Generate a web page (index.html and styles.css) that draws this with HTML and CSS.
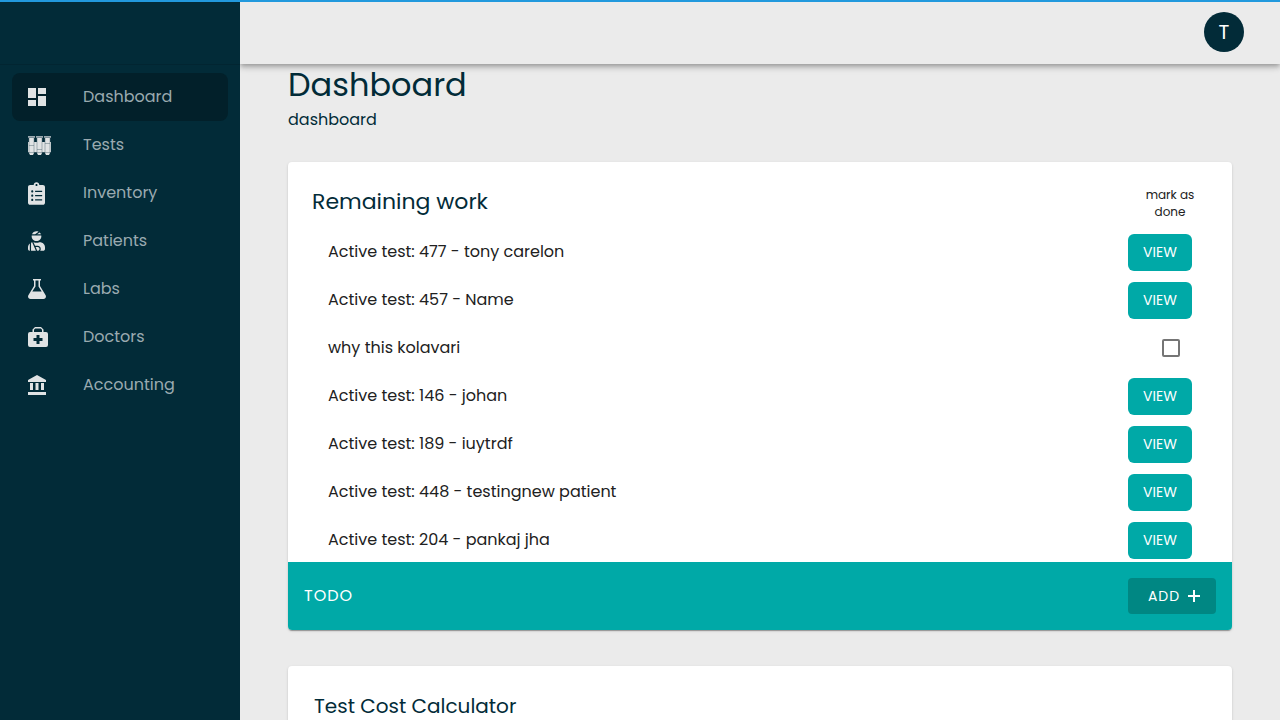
FILE: index.html
```html
<!DOCTYPE html>
<html lang="en">
<head>
<meta charset="utf-8">
<meta name="viewport" content="width=device-width, initial-scale=1">
<title>Dashboard</title>
<link rel="stylesheet" href="styles.css">
</head>
<body>
<div class="progress"></div>
<div class="app">
  <aside class="sidebar">
    <div class="sidebar-head"></div>
    <nav class="nav">
      <a class="nav-link active" href="#"><span class="nav-icon"><svg width="18" height="18" viewBox="0 0 18 18"><path d="M0 0h8v10H0zM10 0h8v6h-8zM0 12h8v6H0zM10 8h8v10h-8z"/></svg></span>Dashboard</a>
      <a class="nav-link" href="#"><span class="nav-icon"><svg width="23" height="19" viewBox="0 0 23 19"><path d="M0 6h23v10H0z"/><path class="tube" d="M0 0h7v2H0zM8 0h7v2H8zM16 0h7v2h-7z"/><path d="M1 2h5v15l-1 2H2l-1-2zM9 2h5v15l-1 2h-3l-1-2zM17 2h5v15l-1 2h-3l-1-2z"/><path class="tube-line" d="M1 2v15M6 2v15M9 2v15M14 2v15M17 2v15M22 2v15M1 9.500h5M9 13.500h5M17 7.500h5M0 16.500h23M0 1.500h7M8 1.500h7M16 1.500h7"/></svg></span>Tests</a>
      <a class="nav-link" href="#"><span class="nav-icon"><svg width="17" height="23" viewBox="0 0 384 512"><path d="M336 64h-80c0-35.300-28.700-64-64-64s-64 28.700-64 64H48C21.500 64 0 85.500 0 112v352c0 26.500 21.500 48 48 48h288c26.500 0 48-21.500 48-48V112c0-26.500-21.500-48-48-48zM96 424c-13.300 0-24-10.700-24-24s10.700-24 24-24 24 10.700 24 24-10.700 24-24 24zm0-96c-13.300 0-24-10.700-24-24s10.700-24 24-24 24 10.700 24 24-10.700 24-24 24zm0-96c-13.300 0-24-10.700-24-24s10.700-24 24-24 24 10.700 24 24-10.700 24-24 24zm96-192c13.300 0 24 10.700 24 24s-10.700 24-24 24-24-10.700-24-24 10.700-24 24-24zm128 368c0 4.400-3.600 8-8 8H168c-4.400 0-8-3.600-8-8v-16c0-4.400 3.600-8 8-8h144c4.400 0 8 3.600 8 8v16zm0-96c0 4.400-3.600 8-8 8H168c-4.400 0-8-3.600-8-8v-16c0-4.400 3.600-8 8-8h144c4.400 0 8 3.600 8 8v16zm0-96c0 4.400-3.600 8-8 8H168c-4.400 0-8-3.600-8-8v-16c0-4.400 3.600-8 8-8h144c4.400 0 8 3.600 8 8v16z"/></svg></span>Inventory</a>
      <a class="nav-link" href="#"><span class="nav-icon"><svg width="17" height="20" viewBox="0 0 448 512"><path d="M277.370 11.980C261.080 4.470 243.110 0 224 0c-53.690 0-99.500 33.130-118.510 80h81.190l90.690-68.020zM342.510 80c-7.900-19.470-20.670-36.200-36.490-49.520L239.990 80h102.520zM224 256c70.690 0 128-57.310 128-128 0-5.480-.950-10.700-1.610-16H97.610c-.670 5.300-1.610 10.520-1.610 16 0 70.690 57.310 128 128 128zM80 299.700V512h128.260l-98.450-221.520A132.835 132.835 0 0 0 80 299.700zM0 464c0 26.510 21.490 48 48 48V320.240C18.880 344.890 0 381.260 0 422.400V464zm256-48h-55.380l42.670 96H256c26.470 0 48-21.530 48-48s-21.530-48-48-48zm57.600-128h-16.710c-22.240 10.180-46.880 16-72.890 16s-50.650-5.820-72.890-16h-7.370l42.670 96H256c44.110 0 80 35.890 80 80 0 18.080-6.260 34.590-16.410 48H400c26.510 0 48-21.490 48-48v-41.600c0-74.230-60.170-134.400-134.400-134.400z"/></svg></span>Patients</a>
      <a class="nav-link" href="#"><span class="nav-icon"><svg width="18" height="20" viewBox="0 0 18 20"><path fill-rule="evenodd" d="M5 0h8v1.500h-1V7l5.500 9c1.200 2-.100 4-2 4h-13c-1.900 0-3.200-2-2-4L6 7V1.500H5zM7.500 1.500v6L4.300 12.600h9.400L10.500 7.500v-6z"/></svg></span>Labs</a>
      <a class="nav-link" href="#"><span class="nav-icon"><svg width="20" height="20" viewBox="0 0 20 20"><path fill-rule="evenodd" d="M7 0h6l2.500 2.500V5H18a2 2 0 0 1 2 2v11a2 2 0 0 1-2 2H2a2 2 0 0 1-2-2V7a2 2 0 0 1 2-2h2.500V2.500zM7.200 1.500 6 2.700V5h8V2.700l-1.200-1.200zM8.500 8v3h-3v3h3v3h3v-3h3v-3h-3V8z"/></svg></span>Doctors</a>
      <a class="nav-link" href="#"><span class="nav-icon"><svg width="18" height="20" viewBox="0 0 18 20"><path d="M9 0 18 5v2H0V5zM2 8h3v7H2zM7.500 8h3v7h-3zM13 8h3v7h-3zM0 17h18v3H0z"/></svg></span>Accounting</a>
    </nav>
  </aside>
  <div class="content">
    <header class="topbar"><button class="avatar" type="button" aria-label="Account menu">T</button></header>
    <main class="main">
      <h1 class="page-title">Dashboard</h1>
      <p class="page-path">dashboard</p>
      <section class="card">
        <div class="work">
          <div class="work-head"><h2 class="work-title">Remaining work</h2><span class="mark" id="mark">mark as done</span></div>
          <ul class="rows">
            <li class="row"><span>Active test: 477 - tony carelon</span><button class="view" type="button">VIEW</button></li>
            <li class="row"><span>Active test: 457 - Name</span><button class="view" type="button">VIEW</button></li>
            <li class="row"><label for="todo">why this kolavari</label><input class="check" id="todo" type="checkbox" aria-describedby="mark"></li>
            <li class="row"><span>Active test: 146 - johan</span><button class="view" type="button">VIEW</button></li>
            <li class="row"><span>Active test: 189 - iuytrdf</span><button class="view" type="button">VIEW</button></li>
            <li class="row"><span>Active test: 448 - testingnew patient</span><button class="view" type="button">VIEW</button></li>
            <li class="row"><span>Active test: 204 - pankaj jha</span><button class="view" type="button">VIEW</button></li>
          </ul>
        </div>
        <footer class="card-foot"><span class="todo">TODO</span><button class="add" type="button">ADD<svg width="12" height="12" viewBox="0 0 12 12"><path d="M5 0h2v5h5v2H7v5H5V7H0V5h5z"/></svg></button></footer>
      </section>
      <section class="card calc"><h2 class="calc-title">Test Cost Calculator</h2></section>
    </main>
  </div>
</div>
</body>
</html>
```
FILE: styles.css
```css
* { box-sizing: border-box; }
body {
  margin: 0;
  height: 100vh;
  overflow: hidden;
  background: #ebebeb;
  color: #212121;
  font-family: Poppins, Inter, "Open Sans", sans-serif;
  font-size: 16px;
  line-height: 24px;
}
button { font-family: inherit; border: 0; cursor: pointer; }
h1, h2, p, ul { margin: 0; padding: 0; font-weight: 400; }
svg { display: block; fill: currentColor; }

.progress { position: fixed; top: 0; left: 0; right: 0; height: 2px; background: #2299dd; z-index: 3; }
.app { display: flex; height: 100%; }

.sidebar { flex: 0 0 240px; background: #022b38; z-index: 2; }
.sidebar-head { height: 65px; border-bottom: 1px solid #022531; }
.nav { display: flex; flex-direction: column; padding: 8px 12px; }
.nav-link {
  display: flex;
  align-items: center;
  height: 48px;
  padding: 0 16px;
  border-radius: 8px;
  color: #9aaab0;
  text-decoration: none;
}
.nav-link.active { background: #02202a; }
.nav-icon { flex: 0 0 55px; color: #e0e3e4; }
.tube { fill: #9caab1; }
.tube-line { fill: none; stroke: #5d737c; stroke-width: 0.5; }

.content { flex: 1; min-width: 0; display: flex; flex-direction: column; }
.topbar {
  flex: 0 0 64px;
  display: flex;
  align-items: center;
  justify-content: flex-end;
  padding: 0 36px;
  background: #ebebeb;
  box-shadow: 0 2px 4px -1px rgba(0, 0, 0, .2), 0 4px 5px rgba(0, 0, 0, .14), 0 1px 10px rgba(0, 0, 0, .12);
  z-index: 1;
}
.avatar { width: 40px; height: 40px; padding: 0; border-radius: 50%; background: #022b38; color: #fff; font-size: 20px; }
.main { flex: 1; min-height: 0; padding: 0 48px; }
.page-title { color: #022b38; font-size: 32px; line-height: 42px; }
.page-path { padding: 2px 0 30px; color: #022b38; }
.card {
  overflow: hidden;
  margin-bottom: 36px;
  border-radius: 4px;
  background: #fff;
  box-shadow: 0 2px 1px -1px rgba(0, 0, 0, .2), 0 1px 1px rgba(0, 0, 0, .14), 0 1px 3px rgba(0, 0, 0, .12);
}
.work { height: 400px; overflow: hidden; padding: 24px 24px 0; }
.work-head { display: flex; justify-content: space-between; height: 42px; }
.work-title { color: #022b38; font-size: 22px; line-height: 32px; }
.mark { width: 60px; margin-right: 8px; font-size: 12px; line-height: 17px; text-align: center; }
.rows { list-style: none; }
.row { display: flex; align-items: center; justify-content: space-between; height: 48px; padding: 0 16px; }
.view { width: 64px; height: 37px; padding: 0; border-radius: 6px; background: #00a9a7; color: #fff; font-size: 14px; }
.check {
  appearance: none;
  width: 18px;
  height: 18px;
  margin: 0 12px;
  border: 2px solid #757575;
  border-radius: 2px;
}
.check:checked { background: #00a9a7; border-color: #00a9a7; }
.card-foot { display: flex; align-items: center; justify-content: space-between; padding: 16px; background: #00a9a7; color: #fff; }
.todo { letter-spacing: 1px; }
.add {
  display: flex;
  align-items: center;
  justify-content: center;
  gap: 8px;
  width: 88px;
  height: 36px;
  padding: 0 0 0 4px;
  border-radius: 4px;
  background: #008783;
  color: #fff;
  font-size: 14px;
  letter-spacing: 1px;
}
.calc { padding: 24px 26px; }
.calc-title { color: #022b38; font-size: 20px; line-height: 32px; }
```
